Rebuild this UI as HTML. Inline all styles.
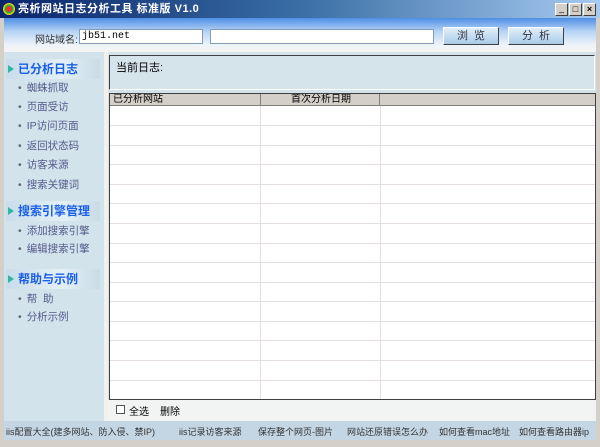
<!DOCTYPE html>
<html><head><meta charset="utf-8"><style>
*{margin:0;padding:0;box-sizing:border-box}
body{width:600px;height:447px;overflow:hidden;background:#d4d0c8;font-family:"Liberation Sans","Noto Sans CJK SC","WenQuanYi Zen Hei",sans-serif;font-size:12px;position:relative}
.a{position:absolute}
.title{left:0;top:0;width:600px;height:18px;background:linear-gradient(90deg,#0a246a,#3a6ea5 50%,#a6caf0);color:#fff;font-weight:bold;font-size:11px;line-height:18px;padding-left:18px;letter-spacing:0.5px}
.tb{top:18px;left:4px;width:592px;height:34px;background:linear-gradient(#4f8ee6,#b7d4f4 40%,#eef4fa 80%,#f4f4f2)}
.inp{background:#fff;border:1px solid #7f9db9;height:15px;font-size:10px;line-height:13px;padding-left:2px;font-family:"Liberation Mono",monospace}
.btn{height:18px;width:56px;background:linear-gradient(#e2effa,#a9cbe9);border:1px solid;border-color:#fff #404040 #404040 #fff;text-align:center;font-size:11px;line-height:16px;color:#334;letter-spacing:6px;padding-left:6px}
.left{left:4px;top:52px;width:100px;height:369px;background:#d3e3ec}
.strip{left:104px;top:52px;width:4px;height:369px;background:#f2f0ec}
.hd{left:14px;width:86px;height:20px;background:linear-gradient(90deg,#c8dcea,#e4f0f6 60%,#c9dbe6);color:#1a5fe8;font-weight:bold;font-size:12px;line-height:20px;padding-left:12px}
.hd:before{content:"";position:absolute;left:2px;top:6px;border-left:6px solid #2fb8a0;border-top:4px solid transparent;border-bottom:4px solid transparent}
.it{left:18px;color:#555a8a;font-size:10.5px;white-space:nowrap}
.it:before{content:"•";margin-right:5px;color:#667}
.main{left:108px;top:52px;width:488px;height:369px;background:#d3e3ec}
.cur{left:109px;top:55px;width:486px;height:35px;border:1px solid #404040;border-color:#404040 #fff #fff #404040;background:#d5e4eb;font-size:11px;padding:3px 0 0 6px}
.tab{left:109px;top:93px;width:487px;height:307px;border:1px solid #404040;background:#fff;overflow:hidden}
.th{position:absolute;top:0;height:12px;background:#d4d0c8;border-right:1px solid #808080;border-bottom:1px solid #808080;font-size:10px;line-height:11px;padding-left:3px;overflow:hidden;white-space:nowrap}
.hl{position:absolute;left:0;width:487px;height:1px;background:#e4dede}
.vl{position:absolute;top:12px;width:1px;height:300px;background:#e4dede}
.bot{left:108px;top:400px;width:488px;height:21px;background:#f2f4f4}
.status{left:4px;top:421px;width:592px;height:19px;background:#c4d6e4}
.s{top:425px;font-size:9px;color:#333;white-space:nowrap}
</style></head><body>
<div class="a title">亮析网站日志分析工具 标准版 V1.0</div>
<div class="a" style="left:3px;top:3px;width:12px;height:12px;border-radius:50%;background:radial-gradient(#e33 30%,#2a2 40%,#fd2 70%,#36c)"></div>
<div class="a" style="left:555px;top:3px;width:42px;height:13px;display:flex;gap:1px">
<div style="width:13px;height:13px;background:#d4d0c8;border:1px solid;border-color:#fff #404040 #404040 #fff;font-size:9px;line-height:9px;text-align:center">_</div>
<div style="width:13px;height:13px;background:#d4d0c8;border:1px solid;border-color:#fff #404040 #404040 #fff;font-size:9px;text-align:center;line-height:11px">□</div>
<div style="width:13px;height:13px;background:#d4d0c8;border:1px solid;border-color:#fff #404040 #404040 #fff;font-size:9px;text-align:center;line-height:11px;font-weight:bold">×</div>
</div>
<div class="a tb"></div>
<div class="a" style="left:35px;top:31px;font-size:10px;color:#333">网站域名:</div>
<div class="a inp" style="left:79px;top:29px;width:124px">jb51.net</div>
<div class="a inp" style="left:210px;top:29px;width:224px"></div>
<div class="a btn" style="left:443px;top:27px">浏览</div>
<div class="a btn" style="left:508px;top:27px">分析</div>
<div class="a left"></div>
<div class="a strip"></div>
<div class="a main"></div>
<div class="a hd" style="left:6px;top:59px;width:94px">已分析日志</div>
<div class="a it" style="top:80px">蜘蛛抓取</div>
<div class="a it" style="top:99px">页面受访</div>
<div class="a it" style="top:118px">IP访问页面</div>
<div class="a it" style="top:138px">返回状态码</div>
<div class="a it" style="top:157px">访客来源</div>
<div class="a it" style="top:177px">搜索关键词</div>
<div class="a hd" style="left:6px;top:201px;width:94px">搜索引擎管理</div>
<div class="a it" style="top:223px">添加搜索引擎</div>
<div class="a it" style="top:241px">编辑搜索引擎</div>
<div class="a hd" style="left:6px;top:269px;width:94px">帮助与示例</div>
<div class="a it" style="top:291px">帮&nbsp;&nbsp;助</div>
<div class="a it" style="top:309px">分析示例</div>
<div class="a cur">当前日志:</div>
<div class="a tab">
<div class="th" style="left:0;width:151px">已分析网站</div>
<div class="th" style="left:151px;width:119px;padding-left:30px">首次分析日期</div>
<div class="th" style="left:270px;width:217px;border-right:0"></div>
<div class="vl" style="left:150px"></div><div class="vl" style="left:270px"></div>
<div class="hl" style="top:31px"></div><div class="hl" style="top:51px"></div><div class="hl" style="top:70px"></div><div class="hl" style="top:90px"></div><div class="hl" style="top:109px"></div><div class="hl" style="top:129px"></div><div class="hl" style="top:149px"></div><div class="hl" style="top:168px"></div><div class="hl" style="top:188px"></div><div class="hl" style="top:207px"></div><div class="hl" style="top:227px"></div><div class="hl" style="top:246px"></div><div class="hl" style="top:266px"></div><div class="hl" style="top:286px"></div>
</div>
<div class="a bot"></div>
<div class="a" style="left:116px;top:405px;width:9px;height:9px;border:1px solid #555;background:#fff"></div>
<div class="a" style="left:129px;top:403px;font-size:10px">全选</div>
<div class="a" style="left:160px;top:403px;font-size:10px">删除</div>
<div class="a status"></div>
<div class="a s" style="left:6px">iis配置大全(建多网站、防入侵、禁IP)</div>
<div class="a s" style="left:179px">iis记录访客来源</div>
<div class="a s" style="left:258px">保存整个网页-图片</div>
<div class="a s" style="left:347px">网站还原错误怎么办</div>
<div class="a s" style="left:439px">如何查看mac地址</div>
<div class="a s" style="left:519px">如何查看路由器ip</div>
</body></html>
